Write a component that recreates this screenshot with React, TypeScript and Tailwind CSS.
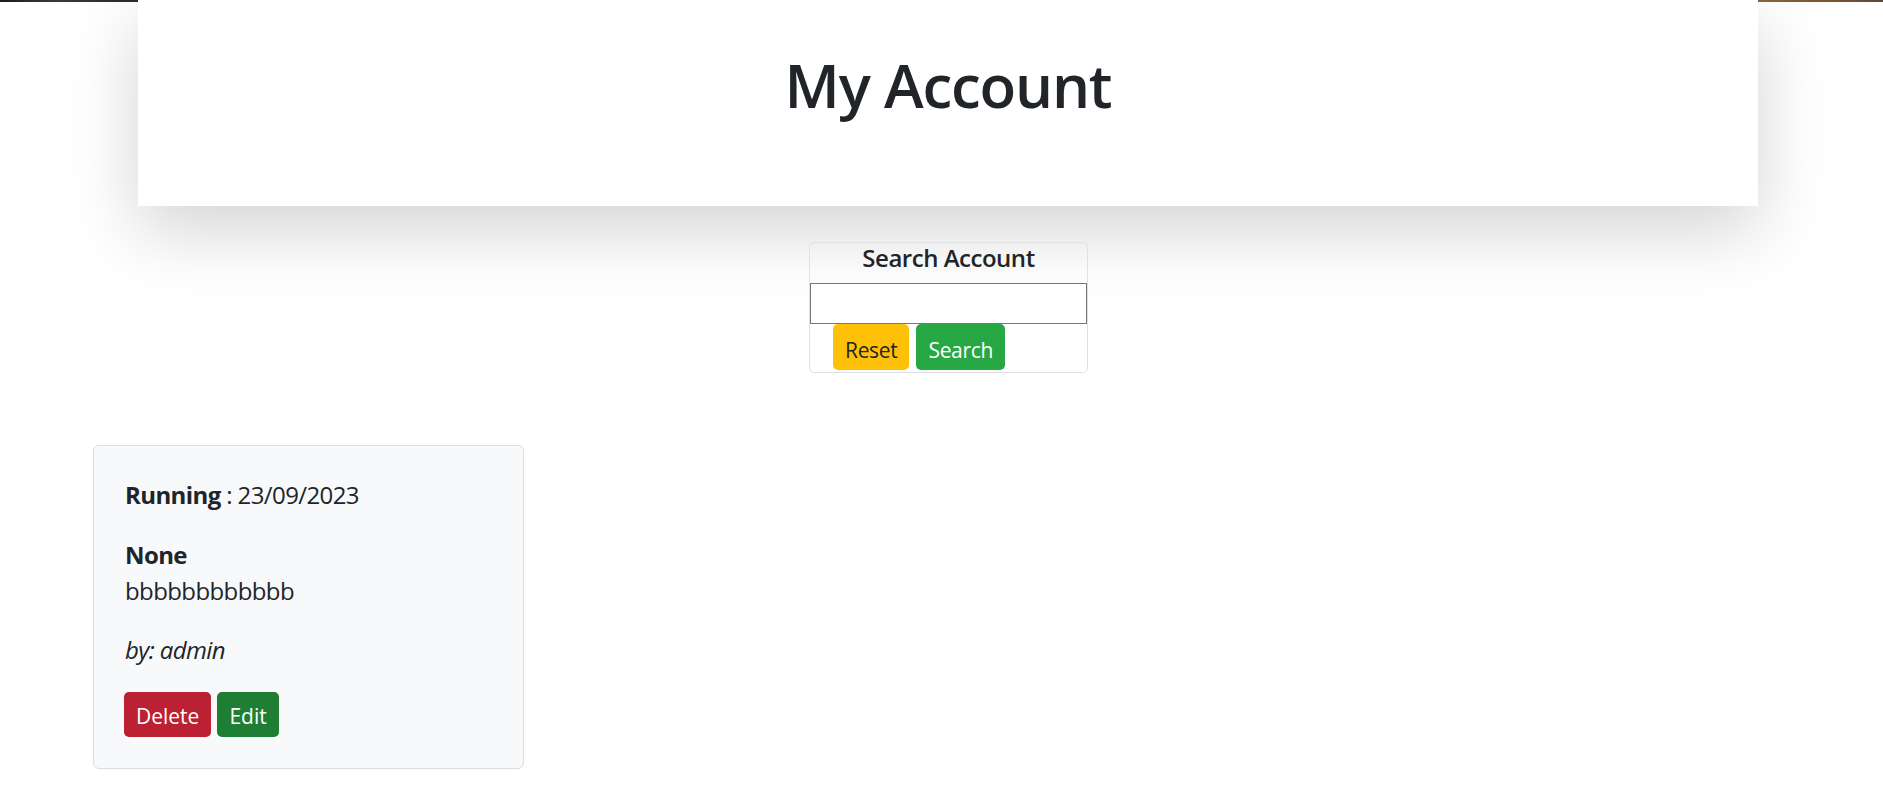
import React from 'react'

const font = { fontFamily: '"Segoe UI", "Open Sans", "Noto Sans", sans-serif' }

function Header() {
  return (
    <div className="ml-[138px] w-[1620px] h-[206px] bg-white shadow-[0_24px_72px_rgba(0,0,0,0.175)] pt-[49px]">
      <h1 className="text-center text-[60px] leading-[72px] font-semibold tracking-[-0.02em] text-[#212529]">My Account</h1>
    </div>
  )
}

function SearchBox() {
  return (
    <div className="ml-[138px] w-[1620px] flex justify-center pt-[36px] pl-[1px]">
      <div className="w-[279px] h-[131px] border border-[#dee2e6] rounded-[5px] flex flex-col">
        <h6 className="text-center text-[24px] leading-[29px] font-semibold tracking-[-0.02em] text-[#212529] mb-[11px]">Search Account</h6>
        <input type="text" className="w-full h-[41px] border border-[#767676] bg-white outline-none" />
        <div className="flex gap-[7px] pl-[23px] tracking-[-0.02em]">
          <button className="h-[46px] px-[12px] pt-[7px] text-[21px] bg-[#ffc107] text-[#212529] rounded-[5px]">Reset</button>
          <button className="h-[46px] px-[12px] pt-[7px] text-[21px] bg-[#28a745] text-white rounded-[5px]">Search</button>
        </div>
      </div>
    </div>
  )
}

function AccountCard() {
  return (
    <div className="ml-[93px] mt-[72px] w-[431px] border border-[#dadde0] rounded-[6px] bg-[#f8f9fa] p-[31px] text-[24px] leading-[36px] tracking-[-0.025em] text-[#212529]">
      <p className="mb-[24px]">
        <b className="font-bold">Running</b> : 23/09/2023
      </p>
      <div className="mb-[23px]">
        <p className="font-bold">None</p>
        <p>bbbbbbbbbbbb</p>
      </div>
      <p className="italic mb-[24px]">by: admin</p>
      <div className="flex gap-[6px] -ml-[1px] tracking-normal">
        <button className="h-[45px] px-[12px] pt-[2px] text-[21px] bg-[#bb2133] text-white rounded-[5px]">Delete</button>
        <button className="h-[45px] px-[12px] pt-[2px] text-[21px] bg-[#1e7e34] text-white rounded-[5px]">Edit</button>
      </div>
    </div>
  )
}

export default function App() {
  return (
    <div
      style={font}
      className="min-h-[810px] bg-white bg-no-repeat bg-[length:100%_2px] bg-[linear-gradient(to_right,#1c1c1c,#3a3a3a_3%,#2a2a2a_7%,#8a6a40_93%,#7a5630_97%,#5a4a3a)]"
    >
      <Header />
      <SearchBox />
      <AccountCard />
    </div>
  )
}
